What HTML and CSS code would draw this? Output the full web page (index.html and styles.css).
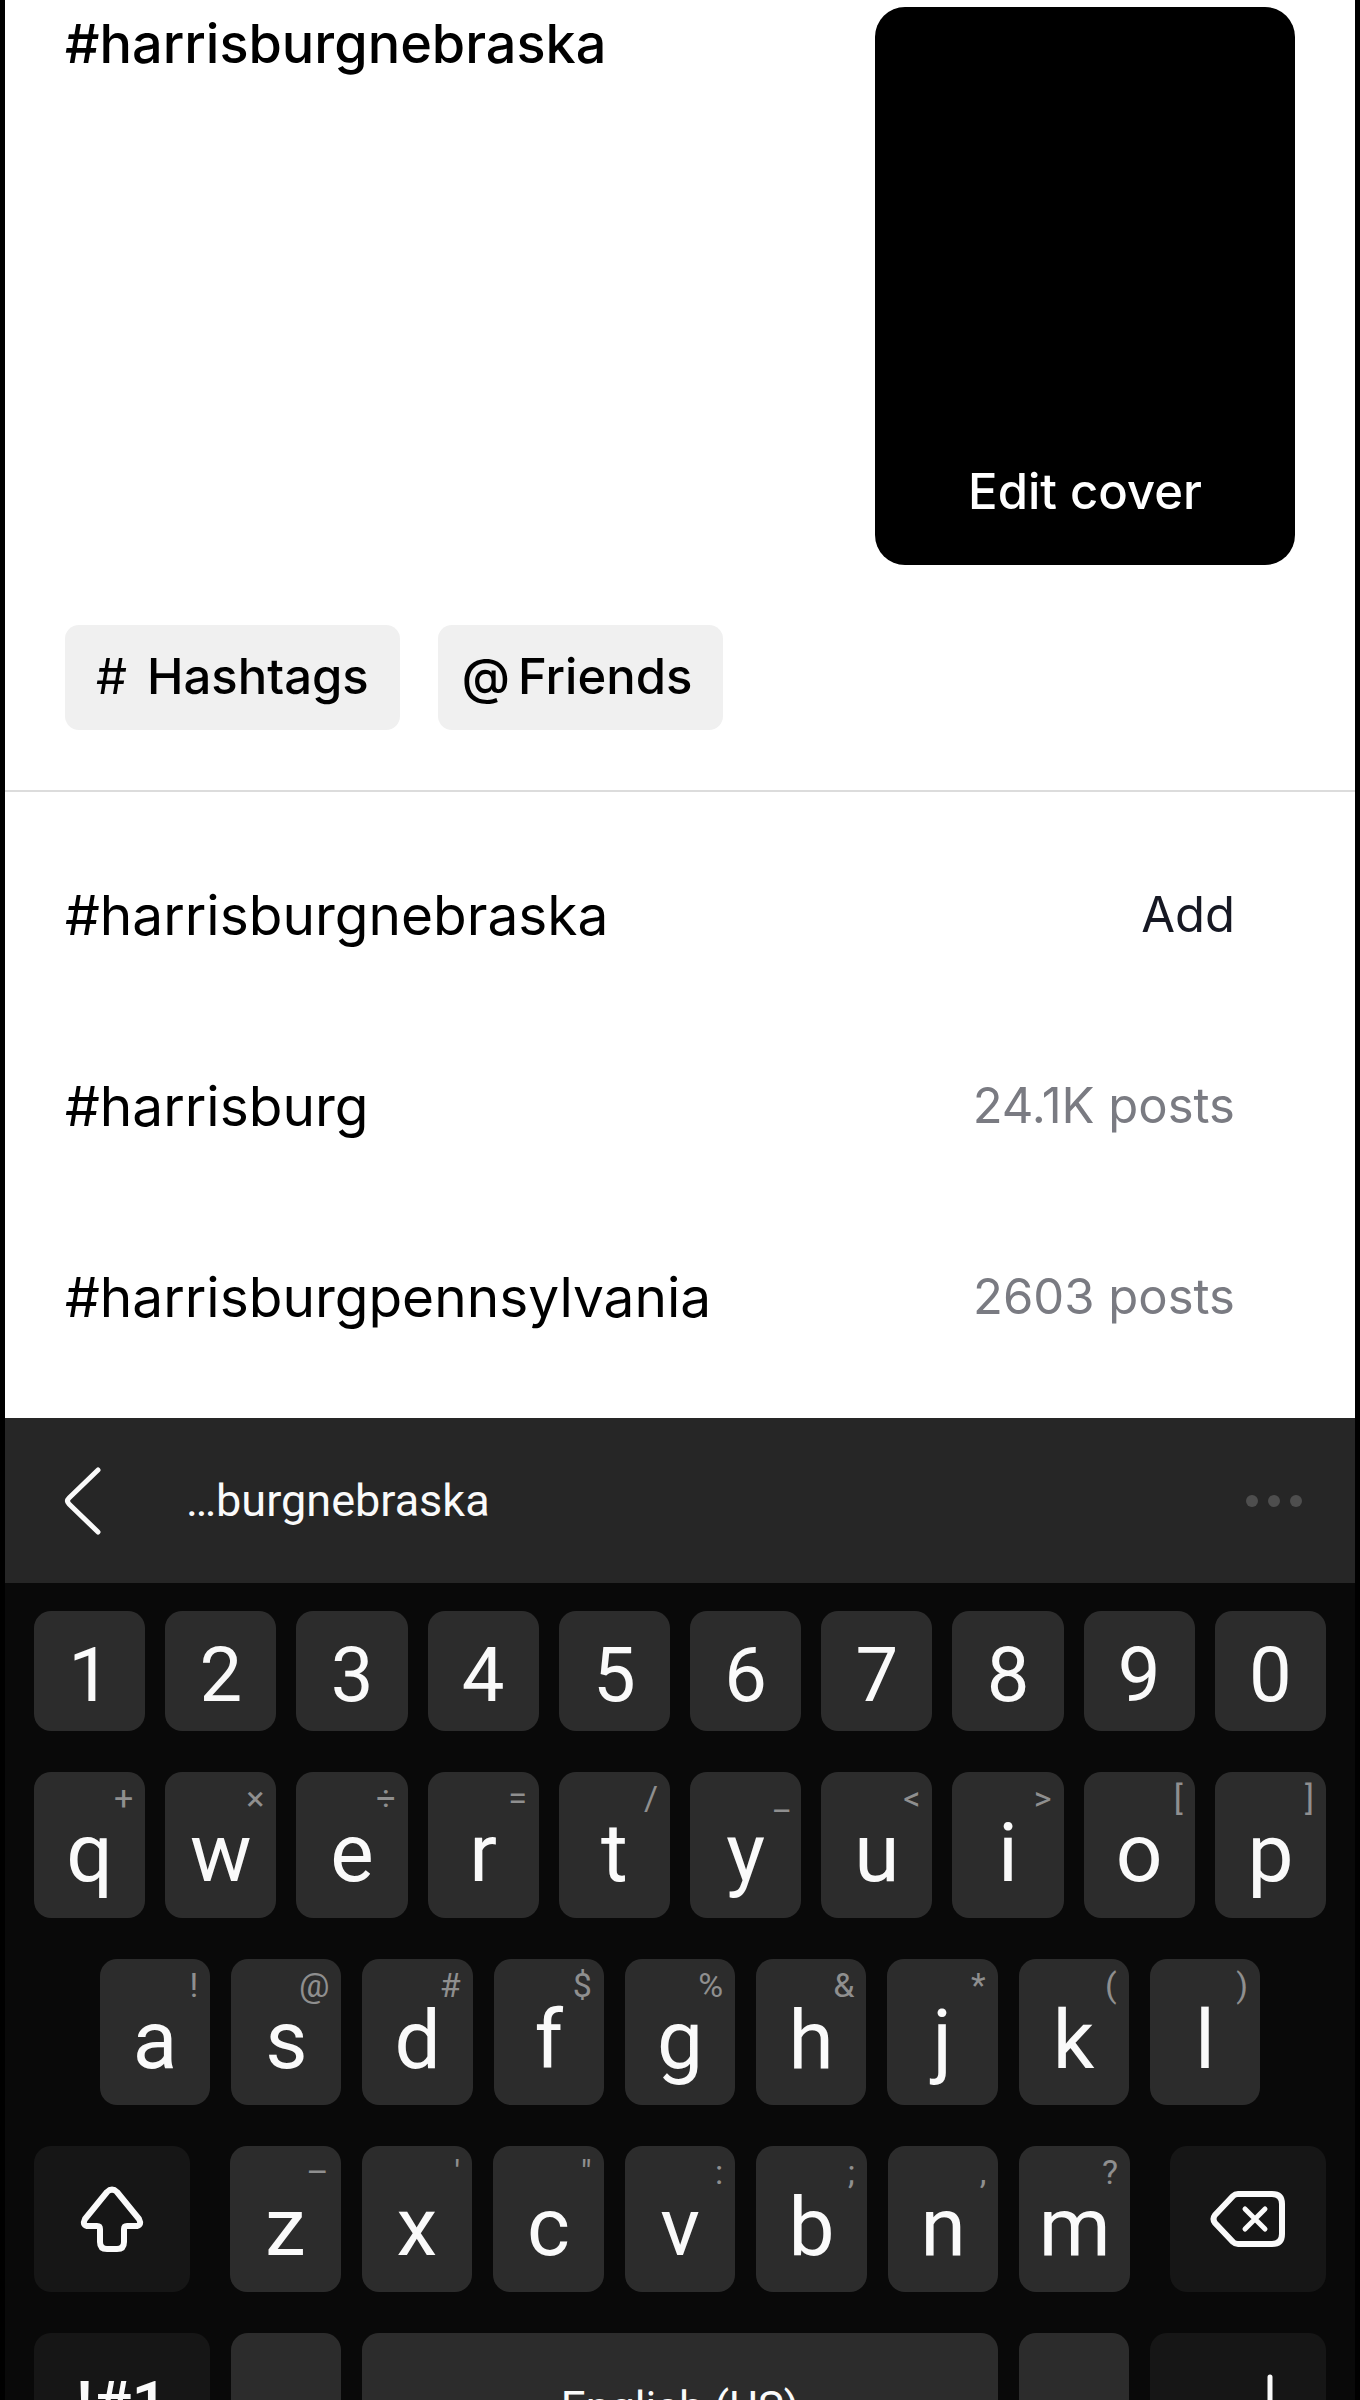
FILE: index.html
```html
<!DOCTYPE html>
<html lang="en">
<head>
    <meta charset="UTF-8">
    <meta name="viewport" content="width=device-width, initial-scale=1.0">
    <title>Post</title>
    <link rel="stylesheet" href="styles.css">
</head>
<body>
    <main class="screen">
        <!-- Caption and cover -->
        <section class="composer">
            <textarea class="caption" aria-label="Caption" spellcheck="false">#harrisburgnebraska</textarea>
            <button class="cover">Edit cover</button>
        </section>
        <div class="chips">
            <button class="chip"><span class="chip-hash">#</span>Hashtags</button>
            <button class="chip chip-friends"><span class="chip-at">@</span>Friends</button>
        </div>

        <!-- Hashtag suggestions -->
        <ul class="suggestions">
            <li class="suggestion">
                <span class="tag">#harrisburgnebraska</span>
                <button class="add">Add</button>
            </li>
            <li class="suggestion">
                <span class="tag">#harrisburg</span>
                <span class="count">24.1K posts</span>
            </li>
            <li class="suggestion">
                <span class="tag">#harrisburgpennsylvania</span>
                <span class="count">2603 posts</span>
            </li>
        </ul>

        <!-- Keyboard -->
        <section class="keyboard">
            <div class="toolbar">
                <button aria-label="Back">
                    <svg width="40" height="72" viewBox="0 0 40 72" fill="none" stroke="#fafafa" stroke-width="5" stroke-linecap="round" stroke-linejoin="round">
                        <path d="M35 5L6 33Q3 36 6 39L35 67"/>
                    </svg>
                </button>
                <button class="prediction">…burgnebraska</button>
                <button class="more" aria-label="More">
                    <svg width="56" height="12" viewBox="0 0 56 12" fill="#4e4e4e">
                        <circle cx="6" cy="6" r="6"/>
                        <circle cx="28" cy="6" r="6"/>
                        <circle cx="50" cy="6" r="6"/>
                    </svg>
                </button>
            </div>
            <div class="keys">
                <div class="row numbers">
                    <button class="key">1</button>
                    <button class="key">2</button>
                    <button class="key">3</button>
                    <button class="key">4</button>
                    <button class="key">5</button>
                    <button class="key">6</button>
                    <button class="key">7</button>
                    <button class="key">8</button>
                    <button class="key">9</button>
                    <button class="key">0</button>
                </div>
                <div class="row">
                    <button class="key">q<span class="hint">+</span></button>
                    <button class="key">w<span class="hint">×</span></button>
                    <button class="key">e<span class="hint">÷</span></button>
                    <button class="key">r<span class="hint">=</span></button>
                    <button class="key">t<span class="hint">/</span></button>
                    <button class="key">y<span class="hint">_</span></button>
                    <button class="key">u<span class="hint">&lt;</span></button>
                    <button class="key">i<span class="hint">&gt;</span></button>
                    <button class="key">o<span class="hint">[</span></button>
                    <button class="key">p<span class="hint">]</span></button>
                </div>
                <div class="row home">
                    <button class="key">a<span class="hint">!</span></button>
                    <button class="key">s<span class="hint">@</span></button>
                    <button class="key">d<span class="hint">#</span></button>
                    <button class="key">f<span class="hint">$</span></button>
                    <button class="key">g<span class="hint">%</span></button>
                    <button class="key">h<span class="hint">&amp;</span></button>
                    <button class="key">j<span class="hint">*</span></button>
                    <button class="key">k<span class="hint">(</span></button>
                    <button class="key">l<span class="hint">)</span></button>
                </div>
                <div class="row bottom">
                    <button class="key special shift" aria-label="Shift">
                        <svg width="64" height="66" viewBox="0 0 64 66" fill="none" stroke="#fafafa" stroke-width="6" stroke-linejoin="round">
                            <path d="M27 6Q32 1 37 6L59 33Q62 39 57 40H47Q44 40 44 43V56Q44 63 37 63H27Q20 63 20 56V43Q20 40 17 40H7Q2 39 5 33Z"/>
                        </svg>
                    </button>
                    <button class="key">z<span class="hint">–</span></button>
                    <button class="key">x<span class="hint">'</span></button>
                    <button class="key">c<span class="hint">"</span></button>
                    <button class="key">v<span class="hint">:</span></button>
                    <button class="key">b<span class="hint">;</span></button>
                    <button class="key">n<span class="hint">,</span></button>
                    <button class="key">m<span class="hint">?</span></button>
                    <button class="key special delete" aria-label="Delete">
                        <svg width="76" height="58" viewBox="0 0 76 58" fill="none" stroke="#fafafa" stroke-width="6" stroke-linecap="round" stroke-linejoin="round">
                            <path d="M28 4H62Q72 4 72 14V44Q72 54 62 54H28Q25 54 23 52L5 33Q2 29 5 25L23 6Q25 4 28 4Z"/>
                            <path stroke-width="5" d="M35 19L55 39M55 19L35 39"/>
                        </svg>
                    </button>
                </div>
                <div class="row last">
                    <button class="key special symbols">!#1</button>
                    <button class="key" aria-label="Comma"></button>
                    <button class="key space">English (US)</button>
                    <button class="key" aria-label="Period"></button>
                    <button class="key special enter" aria-label="Enter">
                        <svg width="72" height="66" viewBox="0 0 72 66" fill="none" stroke="#fafafa" stroke-width="5" stroke-linecap="round" stroke-linejoin="round">
                            <path d="M68 4V38Q68 48 58 48H6M20 34L6 48L20 62"/>
                        </svg>
                    </button>
                </div>
            </div>
        </section>
    </main>
</body>
</html>
```
FILE: styles.css
```css
* {
    box-sizing: border-box;
}

body {
    margin: 0;
    background-color: #000;
    font-family: Inter, "Liberation Sans", sans-serif;
}

button {
    border: none;
    padding: 0;
    background: none;
    color: inherit;
    font-family: inherit;
    cursor: pointer;
}

svg {
    display: block;
}

.screen {
    height: 100vh;
    overflow: hidden;
    margin: 0 5px;
    background-color: #fff;
    color: #000;
}

/* Composer */
.composer {
    display: flex;
    justify-content: space-between;
    padding: 7px 60px 60px;
}

.caption {
    flex: 1;
    height: 558px;
    border: none;
    padding: 0;
    resize: none;
    outline: none;
    overflow: hidden;
    background: none;
    color: #000;
    font-family: inherit;
    font-size: 54px;
    font-weight: 500;
    line-height: 74px;
}

.cover {
    display: flex;
    align-items: flex-end;
    justify-content: center;
    width: 420px;
    height: 558px;
    padding-bottom: 43px;
    border-radius: 30px;
    background-color: #000;
    color: #fff;
    font-size: 49px;
    font-weight: 500;
    line-height: 60px;
}

.chips {
    display: flex;
    gap: 38px;
    padding: 0 60px 60px;
    border-bottom: 2px solid #dcdcdc;
}

.chip {
    display: flex;
    align-items: center;
    height: 105px;
    padding: 0 31px 2px;
    border-radius: 14px;
    background-color: #f0f0f0;
    font-size: 49px;
    font-weight: 500;
    line-height: 60px;
}

.chip-friends {
    padding-left: 24px;
}

.chip-hash {
    margin-right: 20px;
    font-weight: 400;
}

.chip-at {
    margin-right: 8px;
}

/* Suggestions */
.suggestions {
    list-style: none;
    margin: 0;
    padding: 27px 120px 26px 60px;
}

.suggestion {
    display: flex;
    align-items: center;
    justify-content: space-between;
    height: 191px;
}

.tag {
    font-size: 55px;
}

.add,
.count {
    font-size: 49px;
}

.add {
    color: #161823;
}

.count {
    color: #7a7b82;
}

/* Keyboard */
.keyboard {
    background-color: #090909;
    color: #fafafa;
    font-family: Roboto, "Liberation Sans", sans-serif;
}

.toolbar {
    display: flex;
    align-items: center;
    height: 165px;
    padding: 0 53px 0 58px;
    background-color: #262626;
}

.prediction {
    margin-left: 83px;
    font-size: 45px;
}

.more {
    margin-left: auto;
}

.keys {
    display: flex;
    flex-direction: column;
    gap: 41px;
    padding: 28px 29px;
}

.row {
    display: flex;
    gap: 20px;
}

.home,
.bottom,
.last {
    gap: 21px;
}

.home {
    padding: 0 66px;
}

.key {
    position: relative;
    display: flex;
    flex: 1;
    align-items: center;
    justify-content: center;
    height: 146px;
    padding-top: 16px;
    border-radius: 17px;
    background-color: #2c2c2c;
    font-size: 82px;
    line-height: 96px;
}

.numbers .key {
    height: 120px;
    padding-top: 8px;
    font-size: 76px;
}

.hint {
    position: absolute;
    top: 7px;
    right: 12px;
    color: #8f8f8f;
    font-size: 34px;
    line-height: 38px;
}

.special {
    padding-top: 0;
    background-color: #161616;
}

.shift {
    flex: 0 0 156px;
    margin-right: 19px;
}

.delete {
    flex: 0 0 156px;
    margin-left: 19px;
}

.last .key {
    flex: 0 0 110px;
}

.last .symbols,
.last .enter {
    flex-basis: 176px;
}

.last .symbols {
    font-size: 64px;
    font-weight: 500;
}

.last .space {
    flex: 1;
    padding-top: 4px;
    font-size: 44px;
}
```
